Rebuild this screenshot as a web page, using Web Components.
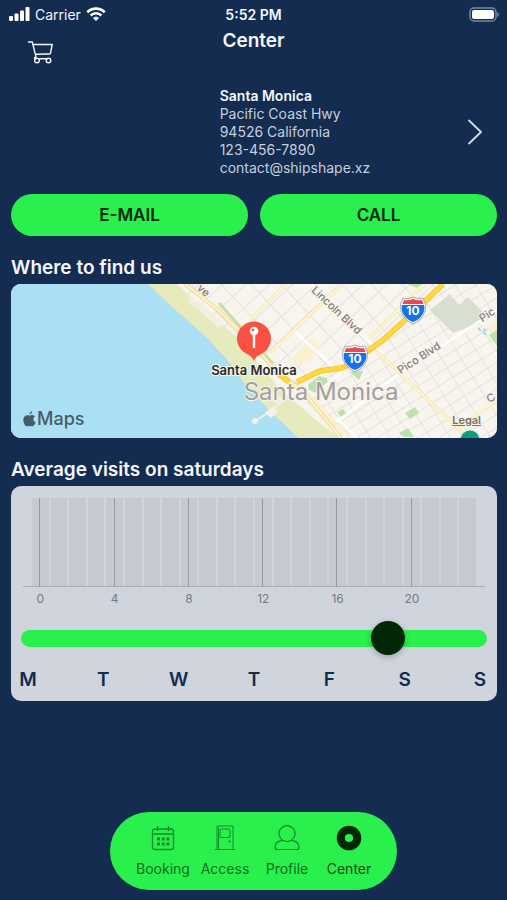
<!DOCTYPE html>
<html lang="en">
<head>
<meta charset="utf-8">
<meta name="viewport" content="width=device-width, initial-scale=1">
<title>Center</title>
<style>
    html{
        --navy: #142c4f;
        --green: #2af04d;
        --forest: #022707;
        --panel: #d0d5dd;
        background: var(--navy);
    }
    body{
        margin: 0;
        font-family: Inter, "Liberation Sans", sans-serif;
        color: #f3f6fb;
    }
</style>
</head>
<body>
<center-app></center-app>

<script>
const define = (name, html, setup) => {
    const template = document.createElement("template");
    template.innerHTML = html;
    customElements.define(name, class extends HTMLElement{
        constructor(){
            super();
            this.attachShadow({mode: "open"});
            this.shadowRoot.appendChild(template.content.cloneNode(true));
        }
        connectedCallback(){
            if(setup) setup(this, this.shadowRoot);
        }
    });
};

define("status-bar", `
    <style>
        :host{
            display: grid;
            grid-template-columns: 1fr auto 1fr;
            align-items: center;
            height: 28px;
            padding: 0 8px;
            font-size: 14px;
        }
        .left{ display: flex; align-items: center; gap: 5px; }
        .time{ font-weight: 600; }
        .battery{ justify-self: end; }
        svg{ display: block; }
    </style>
    <div class="left">
        <svg width="22" height="14" viewBox="0 0 22 14" fill="#fff">
            <rect x="1" y="9" width="4" height="5" rx="1"/><rect x="6.5" y="6.5" width="4" height="7.500" rx="1"/>
            <rect x="12" y="3.500" width="4" height="10.500" rx="1"/><rect x="17.500" y="0" width="4" height="14" rx="1"/>
        </svg>
        <span>Carrier</span>
        <svg width="20" height="14" viewBox="0 0 20 14" fill="none" stroke="#fff" stroke-width="2.600">
            <path d="M1.300 5.200a12.400 12.400 0 0 1 17.400 0"/>
            <path d="M4.600 8.500a7.700 7.700 0 0 1 10.800 0"/>
            <path d="M10 14l-3-3.100a4.200 4.200 0 0 1 6 0z" fill="#fff" stroke="none"/>
        </svg>
    </div>
    <span class="time">5:52 PM</span>
    <svg class="battery" width="31" height="15" viewBox="0 0 31 15">
        <rect x="2" y="1" width="26" height="13" rx="4" fill="none" stroke="#7788a5" stroke-width="1.500"/>
        <rect x="4" y="3" width="22" height="9" rx="2" fill="#fff"/>
        <path d="M29.300 5q1.700 1 1.700 2.500t-1.700 2.500z" fill="#7788a5"/>
    </svg>
`);

define("page-header", `
    <style>
        :host{
            display: grid;
            grid-template-columns: 1fr auto 1fr;
            height: 38px;
            padding: 0 27px;
        }
        button{
            align-self: end;
            justify-self: start;
            padding: 0;
            border: 0;
            background: none;
            color: inherit;
            cursor: pointer;
        }
        svg{ display: block; }
        h1{
            margin: 0;
            font-size: 19px;
            line-height: 26px;
            font-weight: 600;
        }
    </style>
    <button aria-label="Cart">
        <svg width="27" height="26" viewBox="0 0 27 26" fill="none" stroke="currentColor" stroke-width="1.400" stroke-linecap="round" stroke-linejoin="round">
            <path d="M1.500 2h3.800l3 12.200M6 4.500h19.200l-1.700 8.500q-.3 1-1.300 1L8.300 14.200M8.300 14.200l.7 2.800q-2.200.5-1.200 1.800h15.200"/>
            <circle cx="10" cy="20.500" r="2.300" fill="#142c4f"/><circle cx="21.500" cy="20.500" r="2.300" fill="#142c4f"/>
        </svg>
    </button>
    <h1><slot></slot></h1>
`);

define("contact-card", `
    <style>
        :host{ display: block; }
        a{
            display: grid;
            grid-template-columns: 44% 1fr auto;
            align-items: center;
            padding-right: 14px;
            color: #c5cfdd;
            text-decoration: none;
        }
        .lines{
            grid-column: 2;
            padding-left: 1px;
            font-size: 14px;
            line-height: 18px;
        }
        svg{ display: block; }
        ::slotted(*){ display: block; }
        ::slotted(strong){ color: #f3f6fb; font-weight: 600; }
    </style>
    <a href="#center">
        <div class="lines"><slot></slot></div>
        <svg width="16" height="26" viewBox="0 0 16 26" fill="none" stroke="#d4dce8" stroke-width="1.800" stroke-linecap="round" stroke-linejoin="round"><path d="M2 1.500l12 11.500L2 24.500"/></svg>
    </a>
`);

define("pill-button", `
    <style>
        :host{ display: block; flex: 1; }
        button{
            width: 100%;
            height: 42px;
            border: 0;
            border-radius: 21px;
            background: var(--green);
            color: var(--forest);
            font: 600 17px Inter, "Liberation Sans", sans-serif;
            cursor: pointer;
        }
    </style>
    <button><slot></slot></button>
`);

define("page-section", `
    <style>
        :host{ display: block; }
        h2{
            margin: 20px 0 4px;
            font-size: 19px;
            line-height: 24px;
            font-weight: 600;
        }
        .panel{
            overflow: hidden;
            border-radius: 10px;
            background: var(--panel);
        }
    </style>
    <h2></h2>
    <div class="panel"><slot></slot></div>
`, (host, root) => {
    root.querySelector("h2").textContent = host.getAttribute("heading");
});

define("city-map", `
    <style>
        :host{ display: block; position: relative; }
        svg{ display: block; }
        .map{ width: 100%; height: 154px; }
        .map text{ font-family: Inter, "Liberation Sans", sans-serif; paint-order: stroke; stroke: #f8f4ee; stroke-width: 2px; stroke-linejoin: round; }
        .brand{
            position: absolute;
            left: 12px;
            bottom: 8px;
            display: flex;
            align-items: center;
            gap: 1px;
            font-size: 18px;
            line-height: 22px;
            font-weight: 500;
            color: #465d67;
        }
        a{
            position: absolute;
            right: 16px;
            bottom: 11px;
            font-size: 11px;
            line-height: 14px;
            font-weight: 600;
            color: #77736f;
        }
    </style>
    <svg class="map" viewBox="0 0 486 154" preserveAspectRatio="xMidYMid slice">
        <defs>
            <pattern id="north" width="16" height="22" patternUnits="userSpaceOnUse" patternTransform="rotate(47)">
                <path d="M0 0H16M0 0V22" stroke="#dfdcd9" stroke-width="1.400" fill="none"/>
            </pattern>
            <pattern id="south" width="17" height="11" patternUnits="userSpaceOnUse" patternTransform="translate(4 3) rotate(-32)">
                <path d="M0 0H17M0 0V11" stroke="#e1ddd9" stroke-width="1.400" fill="none"/>
            </pattern>
            <g id="shield">
                <path d="M-10-12Q-5-10 0-13Q5-10 10-12Q14-6 12 1Q9 10 0 14Q-9 10-12 1Q-14-6-10-12Z" fill="#f5f5f6" stroke="#9097a4" stroke-width=".8"/>
                <path d="M-9-10Q-4-9 0-11Q4-9 9-10L10.500-6H-10.500Z" fill="#f04552"/>
                <path d="M-11-5H11Q12 1 9 5Q6 10 0 12Q-6 10-9 5Q-12 1-11-5Z" fill="#1473ec"/>
            </g>
        </defs>
        <rect width="486" height="154" fill="#f8f4ee"/>
        <path d="M162 0H432L402 29L344 76L279 98Z" fill="url(#north)"/>
        <path d="M432 0H486V154H325L279 98L344 76L402 29Z" fill="url(#south)"/>
        <path d="M293 61l8-8 9 10-9 13-15 5-6-5zM476 42l10-5v15l-5 1z" fill="#fbf0d2"/>
        <path d="M419 26L439 10L448 21L457 13L472 28L469 38L442 49Z" fill="#d8dfd0"/>
        <g fill="#bfe0ae">
            <path d="M394 129l10-6 4 6-9 6zM388 149l9-5 6 9h-10zM478 51l8-5v16zM339 88l13-1-4 9zM397 0h14l-5 4z"/>
            <path d="M297 101l11-9 8 2 1 8-12 7-7-3zM326 128l6-3 3 4-5 4z"/>
        </g>
        <g fill="none" stroke="#fff" stroke-width="2.400">
            <path d="M326 138L386 91L486 26M282 46L326 86M300 0L356 56L372 69M305 110L330 88L345 77M326 134L346 154"/>
        </g>
        <g fill="none" stroke="#eee2b2" stroke-width="3.200">
            <path d="M239 36L275 0M259 69L331 0M359 53L414 0M366 68L449 146L457 154M449 143L486 116M291 104L338 154"/>
        </g>
        <g fill="none" stroke="#fff6cc" stroke-width="2.200">
            <path d="M239 36L275 0M259 69L331 0M359 53L414 0M366 68L449 146L457 154M449 143L486 116M291 104L338 154"/>
        </g>
        <path d="M137 0H166L196 28L226 53L259 93L272 108L309 139L328 154H287L256 124L236 103L216 76L196 54L162 24Z" fill="#e5ebbd"/>
        <path d="M0 0H137L162 24L196 54L216 76L236 103L256 124L287 154H0Z" fill="#abe0f4"/>
        <path d="M137 0L162 24L196 54L216 76L236 103L256 124L287 154" fill="none" stroke="#c7dfc9" stroke-width="1"/>
        <path d="M260 110l10 9M178 15l12 8 20 19" fill="none" stroke="#f3eee0" stroke-width="7"/>
        <path d="M276 114L257 129L244 137" fill="none" stroke="#f3f0e9" stroke-width="2"/>
        <path d="M254 129l8-7 5 6-7 6z" fill="#f6f2eb"/><circle cx="244" cy="137" r="3" fill="#f3f0e9"/>
        <path d="M208 19L224 37L262 80" fill="none" stroke="#c8dca3" stroke-width="3"/>
        <path d="M174 0L207 26L236 54L268 90L291 106L330 154" fill="none" stroke="#e3d49a" stroke-width="4"/>
        <path d="M174 0L207 26L236 54L268 90L291 106L330 154" fill="none" stroke="#fdf3bb" stroke-width="2.600"/>
        <path d="M263 86L278 98M286 98L309 87L330 84Q338 82 346 75L372 56L402 29L432 0" fill="none" stroke="#efbd2c" stroke-width="5.500"/>
        <path d="M263 86L278 98M286 98L309 87L330 84Q338 82 346 75L372 56L402 29L432 0" fill="none" stroke="#ffd83d" stroke-width="4.300"/>
        <path d="M467 44l3 3m2 0l3 4m-2-6l2 1" stroke="#9fdcee" stroke-width="2"/>
        <circle cx="459" cy="156" r="11" fill="#e3efe6"/><circle cx="459" cy="156" r="9.500" fill="#0c9d7c"/>

        <g font-size="11" font-weight="500" fill="#807c79" text-anchor="middle">
            <text transform="translate(323 29) rotate(43)">Lincoln Blvd</text>
            <text transform="translate(410 77) rotate(-33)">Pico Blvd</text>
            <text transform="translate(478 34) rotate(-33)">Pic</text>
            <text transform="translate(190 9) rotate(43)">ve</text>
            <text transform="translate(482 117) rotate(-33)">C</text>
        </g>
        <text x="310" y="116" font-size="24" fill="#a29f9c" text-anchor="middle">Santa Monica</text>
        <use href="#shield" x="344" y="74"/><use href="#shield" x="402" y="26"/>
        <g font-size="12" font-weight="700" text-anchor="middle">
            <text x="344" y="79" style="fill: #fff; stroke: none">10</text>
            <text x="402" y="31" style="fill: #fff; stroke: none">10</text>
        </g>
        <path d="M243 77Q241 72 236 70A17 17 0 1 1 250 70Q245 72 243 77Z" fill="#fb5142"/>
        <path d="M243 49V63" stroke="#fff" stroke-width="2.400" stroke-linecap="round"/>
        <circle cx="243" cy="47" r="4.300" fill="#fff"/><circle cx="242" cy="46" r="1.300" fill="#fb5142"/>
        <text x="243" y="91" font-size="13" font-weight="600" fill="#29292b" text-anchor="middle">Santa Monica</text>
    </svg>
    <div class="brand">
        <svg width="13" height="16" viewBox="0 0 13 16" fill="currentColor">
            <path d="M9.300 0Q9.300 2.800 6.600 3.700Q6.400 1 9.300 0ZM6.600 4.700Q9.600 3 12 5.400C9.500 7 10 10.300 12.600 11.300Q10.800 16 8.600 15.300Q6.600 14.500 4.900 15.300C2.500 16.200.3 12.200.3 9C.3 5.200 3.500 3.200 6.600 4.700Z"/>
        </svg>
        <span>Maps</span>
    </div>
    <a href="#legal">Legal</a>
`);

define("visit-chart", `
    <style>
        :host{ display: block; padding: 12px 12px 0; }
        .plot{
            display: grid;
            grid-template-columns: repeat(24, 1fr);
            gap: 2px;
            height: 88px;
            padding: 0 9px;
            border-bottom: 1px solid #a9adb3;
        }
        .hour{ background: #c5c9d0; }
        .tick{ background: linear-gradient(90deg, transparent calc(50% - 1px), #96999e 0, #96999e 50%, transparent 0) #c5c9d0; }
        .labels{
            display: grid;
            grid-template-columns: repeat(24, 1fr);
            gap: 2px;
            padding: 4px 9px 0;
            font-size: 12px;
            line-height: 16px;
            color: #757a82;
        }
        .labels span{ display: flex; justify-content: center; width: 100%; min-width: 0; }
    </style>
    <div class="plot"></div>
    <div class="labels"></div>
`, (host, root) => {
    const plot = root.querySelector(".plot");
    const labels = root.querySelector(".labels");
    for(let hour = 0; hour < 24; hour++){
        const bar = document.createElement("div");
        bar.className = hour % 4 ? "hour" : "hour tick";
        plot.appendChild(bar);
        const label = document.createElement("span");
        if(hour % 4 === 0) label.textContent = hour;
        labels.appendChild(label);
    }
});

define("day-slider", `
    <style>
        :host{ display: block; padding: 14px 10px 9px; }
        input{
            -webkit-appearance: none;
            appearance: none;
            display: block;
            width: 100%;
            height: 34px;
            margin: 0;
            background: none;
        }
        input::-webkit-slider-runnable-track{
            height: 17px;
            border-radius: 9px;
            background: var(--green);
        }
        input::-webkit-slider-thumb{
            -webkit-appearance: none;
            width: 34px;
            height: 34px;
            margin-top: -9px;
            border-radius: 50%;
            background: var(--forest);
            box-shadow: 0 2px 6px rgba(0, 0, 0, 0.25);
        }
        .days{
            display: flex;
            justify-content: space-between;
            margin-top: 13px;
            font-size: 19px;
            line-height: 24px;
            font-weight: 600;
            color: var(--navy);
        }
        .days span{ display: flex; justify-content: center; width: 14px; }
    </style>
    <input type="range" min="0" max="100" value="81" aria-label="Day of week">
    <div class="days">
        <span>M</span><span>T</span><span>W</span><span>T</span><span>F</span><span>S</span><span>S</span>
    </div>
`);

define("tab-bar", `
    <style>
        :host{
            display: block;
            margin: auto auto 10px;
        }
        nav{
            display: grid;
            grid-template-columns: repeat(4, 62px);
            height: 78px;
            padding: 0 17px 0 22px;
            border-radius: 39px;
            background: var(--green);
        }
    </style>
    <nav><slot></slot></nav>
`);

define("tab-item", `
    <style>
        :host{ display: block; color: #108a28; }
        :host([active]){ color: var(--forest); }
        a{
            display: flex;
            flex-direction: column;
            align-items: center;
            gap: 8px;
            padding-top: 13px;
            color: inherit;
            text-decoration: none;
            font-size: 14px;
            line-height: 20px;
            white-space: nowrap;
        }
        .label{ color: #08701c; }
        :host([active]) .label{ color: #06480f; }
    </style>
    <a href="#"><slot name="icon"></slot><span class="label"><slot></slot></span></a>
`);

define("center-app", `
    <style>
        :host{
            display: flex;
            flex-direction: column;
            min-height: 100vh;
        }
        main{ padding: 21px 10px 24px 11px; }
        .actions{ display: flex; gap: 12px; margin-top: 17px; }
        tab-item svg{ display: block; }
    </style>
    <status-bar></status-bar>
    <page-header>Center</page-header>
    <main>
        <contact-card>
            <strong>Santa Monica</strong>
            <span>Pacific Coast Hwy</span>
            <span>94526 California</span>
            <span>123-456-7890</span>
            <span>contact@shipshape.xz</span>
        </contact-card>
        <div class="actions">
            <pill-button>E-MAIL</pill-button>
            <pill-button>CALL</pill-button>
        </div>
        <page-section heading="Where to find us">
            <city-map></city-map>
        </page-section>
        <page-section heading="Average visits on saturdays">
            <visit-chart></visit-chart>
            <day-slider></day-slider>
        </page-section>
    </main>
    <tab-bar>
        <tab-item>
            <svg slot="icon" width="26" height="26" viewBox="0 0 26 26" fill="none" stroke="currentColor" stroke-width="1.300">
                <rect x="2.500" y="4" width="21" height="20.500" rx="2.500"/><path d="M2.500 9h21M7.500 1v5M18.500 1v5"/>
                <path d="M7 14h3m1.700 0h3m1.700 0h3M7 19h3m1.700 0h3m1.700 0h3" stroke-width="3"/>
            </svg>
            Booking
        </tab-item>
        <tab-item>
            <svg slot="icon" width="26" height="26" viewBox="0 0 26 26" fill="none" stroke="currentColor" stroke-width="1">
                <path d="M5 24.500V1h16v23.500M3 24.500h20M6.500 24V2.500"/><rect x="8" y="4" width="10" height="8.500" rx="1"/>
                <path d="M16.500 16.500h2" stroke-width="1.500"/>
            </svg>
            Access
        </tab-item>
        <tab-item>
            <svg slot="icon" width="26" height="26" viewBox="0 0 26 26" fill="none" stroke="currentColor" stroke-width="1.200">
                <path d="M8.700 15.300A8 8 0 1 1 17.300 15.300Q13 17.700 8.700 15.300Q1 16 1 22.500Q1 24.500 3 24.500H23Q25 24.500 25 22.500Q25 16 17.300 15.300"/>
            </svg>
            Profile
        </tab-item>
        <tab-item active>
            <svg slot="icon" width="26" height="26" viewBox="0 0 26 26" fill="none" stroke="currentColor" stroke-width="8.200">
                <circle cx="13" cy="13" r="8.200"/>
            </svg>
            Center
        </tab-item>
    </tab-bar>
`);
</script>
</body>
</html>
